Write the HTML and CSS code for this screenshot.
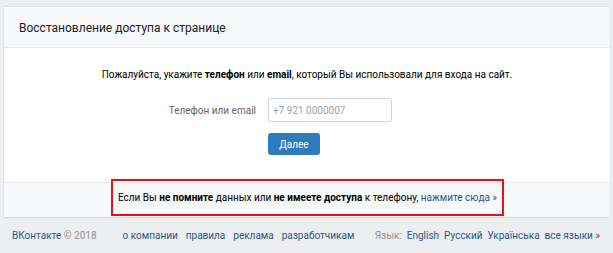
FILE: index.html
```html
<!DOCTYPE html>
<html lang="ru">
<head>
  <meta charset="UTF-8">
  <title>Восстановление доступа к странице</title>
  <link rel="stylesheet" href="styles.css">
</head>
<body>
  <div class="page">
    <div class="card">
      <div class="card-header">Восстановление доступа к странице</div>

      <div class="card-body">
        <p class="intro">Пожалуйста, укажите <b>телефон</b> или <b>email</b>, который Вы использовали для входа на сайт.</p>

        <div class="form-row">
          <label class="label" for="login">Телефон или email</label>
          <input class="input" id="login" type="text" placeholder="+7 921 0000007">
        </div>

        <div class="form-row">
          <span class="label"></span>
          <button class="btn">Далее</button>
        </div>
      </div>

      <div class="card-footer">
        <div class="notice">
          Если Вы <b>не помните</b> данных или <b>не имеете доступа</b> к телефону, <a href="#">нажмите сюда »</a>
        </div>
      </div>
    </div>

    <div class="footer">
      <div class="copy"><a href="#">ВКонтакте</a> © 2018</div>
      <div class="links">
        <a href="#">о компании</a>
        <a href="#">правила</a>
        <a href="#">реклама</a>
        <a href="#">разработчикам</a>
      </div>
      <div class="langs">
        <span class="muted">Язык:</span>
        <a href="#">English</a>
        <a href="#">Русский</a>
        <a href="#">Українська</a>
        <a href="#">все языки »</a>
      </div>
    </div>
  </div>
</body>
</html>
```

FILE: styles.css
```css
body {
  margin: 0;
  background: #edeef0;
  font-family: Roboto, "Open Sans", sans-serif;
  font-size: 10px;
  color: #000;
}

a {
  color: #2a5885;
  text-decoration: none;
}

.page {
  padding: 7px 3px 0 4px;
}

.card {
  background: #fff;
  border-radius: 2px;
  box-shadow: 0 1px 0 0 #d7d8db, 0 0 0 1px #e3e4e8;
}

.card-header {
  background: #f7f8fa;
  border-bottom: 1px solid #e7e8ec;
  height: 40px;
  line-height: 42px;
  padding-left: 15px;
  font-size: 12px;
  color: #222;
}

.card-body {
  padding: 20px 0 27px;
}

.intro {
  margin: 0 0 16px;
  line-height: 14px;
  text-align: center;
}

.form-row {
  display: flex;
  align-items: center;
  margin-bottom: 11px;
}

.form-row:last-child {
  margin-bottom: 0;
}

.label {
  width: 252px;
  padding-right: 12px;
  text-align: right;
  color: #656565;
}

.input {
  width: 124px;
  height: 24px;
  box-sizing: border-box;
  border: 1px solid #d3d9de;
  border-radius: 2px;
  padding: 0 4px;
  font-family: inherit;
  font-size: 10px;
}

.input::placeholder {
  color: #a0a0a0;
}

.btn {
  width: 52px;
  height: 22px;
  background: #2f7cba;
  color: #fff;
  border: none;
  border-radius: 3px;
  font-family: inherit;
  font-size: 10px;
  padding: 0;
}

.card-footer {
  background: #f7f8fa;
  border-top: 1px solid #e7e8ec;
  height: 34px;
  padding-left: 107px;
}

.notice {
  width: 393px;
  height: 37px;
  margin-top: -4px;
  border: 2px solid #e8111a;
  box-sizing: border-box;
  line-height: 33px;
  text-align: center;
  white-space: nowrap;
}

.footer {
  display: flex;
  align-items: center;
  height: 37px;
  padding: 0 10px 0 8px;
  color: #939393;
  white-space: nowrap;
}

.links {
  margin-left: 26px;
  display: flex;
  gap: 8px;
}

.langs {
  margin-left: auto;
  display: flex;
  gap: 5px;
}

.muted {
  color: #939393;
}
```
